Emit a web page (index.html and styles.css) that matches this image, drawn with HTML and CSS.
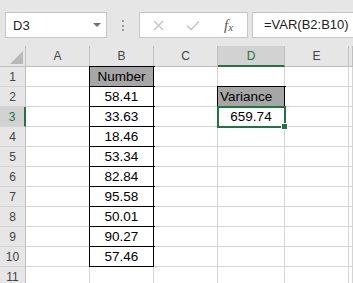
FILE: index.html
```html
<!DOCTYPE html>
<html lang="en">
<head>
<meta charset="UTF-8">
<title>VAR sheet</title>
<link rel="stylesheet" href="styles.css">
</head>
<body>

<div class="formula-bar">
  <div class="name-box"><span>D3</span><span class="caret"></span></div>
  <div class="grip"><i></i><i></i><i></i></div>
  <div class="fx-buttons">
    <svg class="cancel" width="11" height="11" viewBox="0 0 11 11"><path d="M1 1 L10 10 M10 1 L1 10" stroke="#c8c8c8" stroke-width="1.6" fill="none"/></svg>
    <svg class="enter" width="14" height="11" viewBox="0 0 14 11"><path d="M1 5.5 L5 9.5 L13 1.5" stroke="#c8c8c8" stroke-width="1.6" fill="none"/></svg>
    <span class="fx">f<sub>x</sub></span>
  </div>
  <div class="formula">=VAR(B2:B10)</div>
</div>

<div class="sheet">
  <!-- column headers -->
  <div class="c h corner"><svg width="13" height="13" viewBox="0 0 13 13"><polygon points="13,0 13,13 0,13" fill="#b9b9b9"/></svg></div>
  <div class="c h">A</div>
  <div class="c h">B</div>
  <div class="c h">C</div>
  <div class="c h col-sel">D</div>
  <div class="c h">E</div>
  <div class="c h"></div>

  <div class="c rh">1</div><div class="c"></div><div class="c box fill">Number</div><div class="c"></div><div class="c"></div><div class="c"></div><div class="c"></div>
  <div class="c rh">2</div><div class="c"></div><div class="c box">58.41</div><div class="c"></div><div class="c box fill left">Variance</div><div class="c"></div><div class="c"></div>
  <div class="c rh row-sel">3</div><div class="c"></div><div class="c box">33.63</div><div class="c"></div><div class="c active">659.74</div><div class="c"></div><div class="c"></div>
  <div class="c rh">4</div><div class="c"></div><div class="c box">18.46</div><div class="c"></div><div class="c"></div><div class="c"></div><div class="c"></div>
  <div class="c rh">5</div><div class="c"></div><div class="c box">53.34</div><div class="c"></div><div class="c"></div><div class="c"></div><div class="c"></div>
  <div class="c rh">6</div><div class="c"></div><div class="c box">82.84</div><div class="c"></div><div class="c"></div><div class="c"></div><div class="c"></div>
  <div class="c rh">7</div><div class="c"></div><div class="c box">95.58</div><div class="c"></div><div class="c"></div><div class="c"></div><div class="c"></div>
  <div class="c rh">8</div><div class="c"></div><div class="c box">50.01</div><div class="c"></div><div class="c"></div><div class="c"></div><div class="c"></div>
  <div class="c rh">9</div><div class="c"></div><div class="c box">90.27</div><div class="c"></div><div class="c"></div><div class="c"></div><div class="c"></div>
  <div class="c rh">10</div><div class="c"></div><div class="c box">57.46</div><div class="c"></div><div class="c"></div><div class="c"></div><div class="c"></div>
  <div class="c rh">11</div><div class="c"></div><div class="c"></div><div class="c"></div><div class="c"></div><div class="c"></div><div class="c"></div>
</div>

</body>
</html>
```

FILE: styles.css
```css
html, body {
  margin: 0;
  overflow: hidden;
  background: #fff;
  font-family: "Liberation Sans", Arial, sans-serif;
}

/* top formula bar */
.formula-bar {
  display: flex;
  align-items: flex-start;
  height: 46px;
  box-sizing: border-box;
  padding: 12px 0 0 5px;
  background: #e6e6e6;
}
.name-box {
  width: 102px;
  height: 26px;
  box-sizing: border-box;
  border: 1px solid #c6c6c6;
  background: #fff;
  display: flex;
  align-items: center;
  justify-content: space-between;
  padding: 0 5px 0 7px;
  font-size: 13px;
  color: #222;
}
.caret {
  width: 0;
  height: 0;
  border-left: 4px solid transparent;
  border-right: 4px solid transparent;
  border-top: 4px solid #707070;
}
.grip {
  display: flex;
  flex-direction: column;
  gap: 2.5px;
  margin: 8px 0 0 15px;
}
.grip i {
  display: block;
  width: 2px;
  height: 2px;
  background: #9b9b9b;
}
.fx-buttons {
  width: 109px;
  height: 26px;
  box-sizing: border-box;
  margin-left: 15px;
  border: 1px solid #c6c6c6;
  background: #fff;
  display: flex;
  align-items: center;
}
.fx-buttons .cancel { margin-left: 13px; }
.fx-buttons .enter { margin-left: 22px; }
.fx {
  margin-left: 24px;
  font-family: "Liberation Serif", serif;
  font-style: italic;
  font-size: 15px;
  color: #555;
}
.fx sub {
  font-size: 11px;
  vertical-align: -1px;
}
.formula {
  flex: 1;
  height: 26px;
  box-sizing: border-box;
  margin-left: 4px;
  border: 1px solid #c6c6c6;
  border-right: none;
  background: #fff;
  padding-left: 11px;
  font-size: 13px;
  line-height: 24px;
  color: #222;
}

/* grid */
.sheet {
  display: grid;
  grid-template-columns: 26px 64px 64px 64px 67px 64px 1fr;
  grid-template-rows: 21px;
  grid-auto-rows: 20px;
}
.c {
  box-sizing: border-box;
  border-right: 1px solid #d4d4d4;
  border-bottom: 1px solid #d4d4d4;
  display: flex;
  align-items: center;
  justify-content: center;
  font-size: 13.5px;
  color: #000;
  background: #fff;
}
.h {
  background: #e6e6e6;
  border-color: #bfbfbf;
  font-size: 12px;
  color: #444;
}
.corner {
  align-items: flex-end;
  justify-content: flex-end;
  padding: 0 2px 2px 0;
}
.rh {
  background: #e6e6e6;
  border-right-color: #bfbfbf;
  font-size: 12px;
  color: #444;
}
.col-sel {
  background: #d2d2d2;
  border-bottom: 2px solid #217346;
  color: #217346;
}
.row-sel {
  background: #d2d2d2;
  border-right: 2px solid #217346;
  color: #217346;
}
.box {
  border-color: #000;
  box-shadow: 0 0 0 1px #000;
}
.fill { background: #a6a6a6; }
.left {
  justify-content: flex-start;
  padding-left: 2px;
}
.active {
  position: relative;
  z-index: 1;
  border-color: #217346;
  box-shadow: 0 0 0 1px #217346, inset 1px 1px 0 0 #217346;
}
.active::after {
  content: "";
  position: absolute;
  right: -4px;
  bottom: -4px;
  width: 5px;
  height: 5px;
  background: #217346;
  border: 1px solid #fff;
}
```
